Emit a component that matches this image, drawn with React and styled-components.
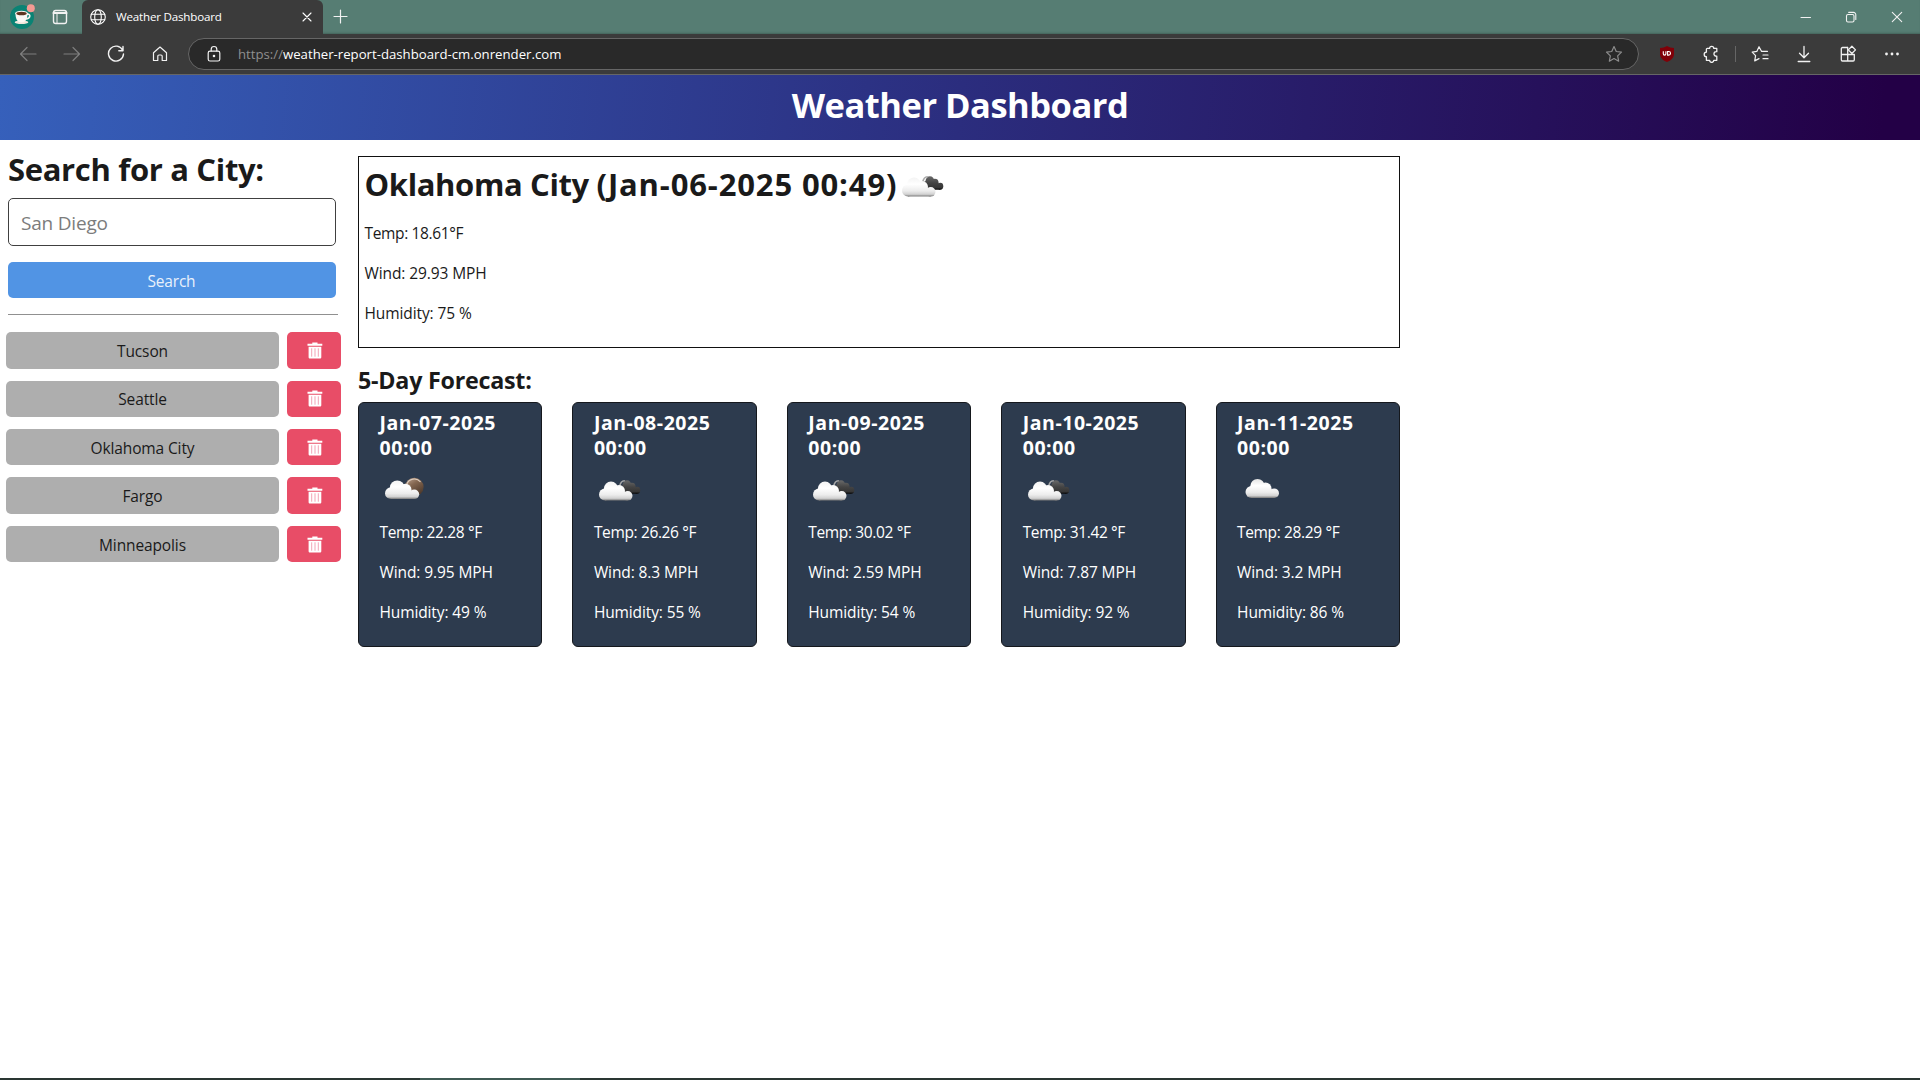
import React from "react";
import styled, { createGlobalStyle } from "styled-components";

const Global = createGlobalStyle`
  * { box-sizing: border-box; }
  html, body { margin: 0; padding: 0; background: #fff; overflow: hidden; }
  body { font-family: "Open Sans", "Noto Sans", sans-serif; color: #1a1a1a; }
  h1, h2, h3, h4, p { margin: 0; }
  svg { display: block; flex: none; }
`;

const Window = styled.div`
  width: 1920px;
  height: 1080px;
  display: flex;
  flex-direction: column;
  overflow: hidden;
`;

/* ---------- browser frame ---------- */
const TabBar = styled.div`
  height: 34px;
  flex: none;
  display: flex;
  background: #567d73;
  box-shadow: inset 0 -2px 2px -1px #44635b;
`;
const Slot = styled.div`
  width: ${(p) => p.$w || 44}px;
  height: ${(p) => p.$h || 32}px;
  flex: none;
  display: flex;
  align-items: center;
  justify-content: center;
  color: ${(p) => p.$color || "#f2f2f2"};
`;
const Tab = styled.div`
  width: 241px;
  height: 34px;
  margin-left: 6px;
  padding: 0 10px 0 8px;
  display: flex;
  align-items: center;
  background: #3b3b3b;
  color: #fff;
  border-radius: 6px 6px 0 0;
`;
const TabTitle = styled.span`
  flex: 1;
  margin-left: 10px;
  font-size: 11.6px;
  line-height: 16px;
  letter-spacing: -0.2px;
`;
const Caption = styled.div`
  margin-left: auto;
  display: flex;
`;
const Toolbar = styled.div`
  height: 40px;
  flex: none;
  display: flex;
  align-items: center;
  padding: 0 6px;
  background: #3b3b3b;
`;
const Address = styled.div`
  flex: 1;
  height: 32px;
  margin: 0 6px;
  display: flex;
  align-items: center;
  background: #292929;
  border: 1px solid #666;
  border-radius: 16px;
  color: #fff;
  font-size: 13.2px;
  line-height: 18px;
`;
const Scheme = styled.span`
  color: #8f8f8f;
`;
const Host = styled.span`
  flex: 1;
`;
const Divider = styled.div`
  width: 1px;
  height: 16px;
  margin: 0 2px;
  background: #666;
`;
const FrameEdge = styled.div`
  height: 1px;
  flex: none;
  background: #666;
`;

/* ---------- page ---------- */
const Banner = styled.header`
  height: 65px;
  flex: none;
  padding-top: 3px;
  background: linear-gradient(95deg, #3660bb 0%, #2b2d7e 50%, #230046 98%);
`;
const BannerTitle = styled.h1`
  font-size: 34.5px;
  line-height: 54px;
  letter-spacing: -0.5px;
  text-align: center;
  color: #fff;
`;
const Page = styled.main`
  flex: 1;
  display: flex;
`;
const Sidebar = styled.aside`
  width: 358px;
  padding: 10px 0 0 8px;
`;
const SearchTitle = styled.h2`
  font-size: 31px;
  line-height: 38px;
  letter-spacing: -0.33px;
  margin-bottom: 10px;
`;
const CityInput = styled.input`
  display: block;
  width: 328px;
  height: 48px;
  padding: 1px 12px 0;
  border: 1px solid #404040;
  border-radius: 5px;
  font: 400 19px "Open Sans", sans-serif;
  letter-spacing: -0.2px;
  outline: none;
  &::placeholder {
    color: #7c7c7c;
    opacity: 1;
  }
`;
const SearchButton = styled.button`
  display: block;
  width: 328px;
  height: 36px;
  margin-top: 16px;
  padding: 1px 1px 0 0;
  border: 0;
  border-radius: 5px;
  background: #5194e4;
  color: #e9f1fb;
  font: 15.5px "Open Sans", sans-serif;
  letter-spacing: -0.2px;
`;
const Rule = styled.div`
  width: 330px;
  height: 1px;
  margin-top: 16px;
  background: #909090;
`;
const History = styled.div`
  margin: 17.3px 0 0 -2px;
  display: flex;
  flex-direction: column;
  gap: 12px;
`;
const HistoryRow = styled.div`
  display: flex;
  gap: 8px;
  height: 36.4px;
`;
const CityButton = styled.button`
  width: 273px;
  padding: 1px 0 0;
  border: 0;
  border-radius: 5px;
  background: #aeaeae;
  color: #1a1a1a;
  font: 15.5px "Open Sans", sans-serif;
  letter-spacing: -0.12px;
`;
const DeleteButton = styled.button`
  width: 54px;
  padding: 0 0 0 1px;
  border: 0;
  border-radius: 5px;
  background: #e84d67;
  display: flex;
  align-items: center;
  justify-content: center;
`;
const Content = styled.section`
  width: 1042px;
  padding-top: 16px;
`;
const Current = styled.div`
  height: 192px;
  padding: 7px 5.5px 0;
  border: 1px solid #111;
`;
const CurrentTitle = styled.h2`
  height: 40px;
  margin-bottom: 17px;
  display: flex;
  align-items: center;
  font-size: 31px;
  line-height: 40px;
  white-space: pre;
`;
const CityName = styled.span`
  letter-spacing: -0.37px;
`;
const Stamp = styled.span`
  letter-spacing: 0.86px;
`;
const TitleIcon = styled.span`
  padding-top: 3px;
`;
const Metric = styled.p`
  font-size: 15.5px;
  line-height: 24px;
  letter-spacing: ${(p) => p.$track}px;
  & + & {
    margin-top: 16px;
  }
`;
const ForecastTitle = styled.h3`
  margin: 16px 0 6px;
  font-size: 23.3px;
  line-height: 32px;
  letter-spacing: -0.25px;
`;
const Forecast = styled.div`
  display: grid;
  grid-template-columns: repeat(5, 1fr);
  gap: 30px;
`;
const Card = styled.article`
  height: 245px;
  padding: 7px 20px 0 20.5px;
  border: 1px solid #15181d;
  border-radius: 6px;
  background: #2d3b4e;
  color: #fff;
`;
const CardDate = styled.h4`
  font-size: 19.5px;
  line-height: 25px;
  letter-spacing: 0.55px;
`;
const IconBox = styled.div`
  height: 50px;
  margin: 5px 0;
`;
const TaskbarEdge = styled.div`
  height: 2px;
  flex: none;
  padding-left: 420px;
  background: #2a3633;
`;
const TaskbarGlow = styled.div`
  width: 160px;
  height: 2px;
  background: #3f5a53;
`;

/* ---------- drawings ---------- */
const Line = ({ size = 18, w = 1.2, children }) => (
  <svg width={size} height={size} viewBox={`0 0 ${size} ${size}`} fill="none" stroke="currentColor" strokeWidth={w} strokeLinecap="round" strokeLinejoin="round">
    {children}
  </svg>
);

const Avatar = () => (
  <svg width="28" height="28" viewBox="0 0 28 28">
    <circle cx="14" cy="15" r="12" fill="#0a8374" />
    <ellipse cx="13.5" cy="20.3" rx="6.8" ry="1.8" fill="#efe6dc" />
    <path d="M19 12.200c4-.8 3.900 4.200-1.300 4.700" fill="none" stroke="#f7f3ee" strokeWidth="1.600" />
    <path d="M7.500 11.500c0 5 1.700 9 6 9s6-4 6-9z" fill="#fbf8f4" />
    <ellipse cx="13.500" cy="11.300" rx="6.300" ry="2.500" fill="#fbf8f4" />
    <ellipse cx="13.500" cy="11.500" rx="5.200" ry="1.800" fill="#5d3520" />
    <circle cx="22.800" cy="6.300" r="4" fill="#f59a93" />
  </svg>
);

const Trash = () => (
  <svg width="16" height="17" viewBox="0 0 16 17">
    <path fill="#fff" d="M5.3 0.6h5.2v1.2h4.8v1.9H.5V1.8h4.8zM1.6 4.8h12.7v10.4c0 .9-.6 1.4-1.4 1.4H3c-.8 0-1.4-.5-1.4-1.400z" />
    <path stroke="#f3a3b6" strokeWidth="1" d="M4.700 6.300v8.400M8 6.300v8.400M11.300 6.300v8.400" />
  </svg>
);

const Puffs = ({ fill }) => (
  <g fill={fill}>
    <circle cx="6" cy="13" r="6" />
    <circle cx="12" cy="7.2" r="7.2" />
    <circle cx="20" cy="9.5" r="6" />
    <circle cx="28.7" cy="14.2" r="4.8" />
    <path d="M6 10h18l4.7 0.8V19H6z" />
  </g>
);

const WeatherIcon = ({ kind, id }) => {
  const at = { moon: "translate(5 15.4) scale(1.02 .98)", broken: "translate(5 16.6)", cloud: "translate(8.5 14)" }[kind];
  return (
    <svg width="50" height="50" viewBox="0 0 50 50">
      <defs>
        <linearGradient id={`${id}w`} x1="0" y1="0" x2="0" y2="19" gradientUnits="userSpaceOnUse">
          <stop offset="0" stopColor={kind === "cloud" ? "#e4e4e4" : "#f4f4f4"} />
          <stop offset=".35" stopColor="#fff" />
          <stop offset=".7" stopColor="#ececec" />
          <stop offset=".88" stopColor="#d2d2d2" />
          <stop offset="1" stopColor="#777" />
        </linearGradient>
        <linearGradient id={`${id}d`} x1="0" y1="0" x2="0" y2="19" gradientUnits="userSpaceOnUse">
          <stop offset="0" stopColor="#6a6a6a" />
          <stop offset=".5" stopColor="#444" />
          <stop offset=".85" stopColor="#363636" />
          <stop offset="1" stopColor="#080808" />
        </linearGradient>
        <linearGradient id={`${id}m`} x1="0" y1="0" x2="0.6" y2="1">
          <stop offset="0" stopColor="#c4ab98" />
          <stop offset=".45" stopColor="#836650" />
          <stop offset="1" stopColor="#4e3a2c" />
        </linearGradient>
      </defs>
      {kind === "moon" && (
        <g>
          <circle cx="34.3" cy="22" r="9.3" fill={`url(#${id}m)`} />
          <path d="M26.5 20a8.2 8.2 0 0 1 14-3.2" fill="none" stroke="#e0d0c2" strokeWidth="1.1" />
        </g>
      )}
      {kind === "broken" && (
        <g>
          <g transform="translate(25.5 15.2) scale(.62 .71)">
            <Puffs fill={`url(#${id}d)`} />
          </g>
          <path d="M25.8 21.5c.2-3.4 2.2-5.9 5-5.7" fill="none" stroke="#a8a8a8" strokeWidth="1.5" />
        </g>
      )}
      <g transform={at}>
        <Puffs fill={`url(#${id}w)`} />
      </g>
    </svg>
  );
};

const CITIES = ["Tucson", "Seattle", "Oklahoma City", "Fargo", "Minneapolis"];
const DAYS = [
  { date: "Jan-07-2025 00:00", kind: "moon", temp: "22.28", wind: "9.95", hum: 49 },
  { date: "Jan-08-2025 00:00", kind: "broken", temp: "26.26", wind: "8.3", hum: 55 },
  { date: "Jan-09-2025 00:00", kind: "broken", temp: "30.02", wind: "2.59", hum: 54 },
  { date: "Jan-10-2025 00:00", kind: "broken", temp: "31.42", wind: "7.87", hum: 92 },
  { date: "Jan-11-2025 00:00", kind: "cloud", temp: "28.29", wind: "3.2", hum: 86 },
];

const STAR = "M9 1.6l2.25 4.9 5.25.65-3.85 3.7 1 5.35L9 13.6l-4.65 2.6 1-5.35L1.5 7.15l5.25-.65z";

export default function App() {
  return (
    <Window>
      <Global />
      <TabBar>
        <Slot $w={44}><Avatar /></Slot>
        <Slot $w={32} $h={34}>
          <Line size={16} w={1.4}>
            <rect x="1.5" y="1.5" width="13" height="13" rx="2.2" />
            <path d="M1.5 4h13" strokeWidth="2" />
            <path d="M5 4v10" strokeWidth="1" />
          </Line>
        </Slot>
        <Tab>
          <Line size={16} w={1.1}>
            <circle cx="8" cy="8" r="7.3" />
            <ellipse cx="8" cy="8" rx="3.3" ry="7.3" />
            <path d="M1.3 5.3h13.4M1.3 10.7h13.4" />
          </Line>
          <TabTitle>Weather Dashboard</TabTitle>
          <Line size={12} w={1.1}><path d="M2 2l8 8M10 2l-8 8" /></Line>
        </Tab>
        <Slot $w={35} $h={33}>
          <Line size={15}><path d="M7.5 1v13M1 7.5h13" /></Line>
        </Slot>
        <Caption>
          <Slot $w={46} $h={34}><Line size={11} w={1}><path d="M1 5.5h9.5" /></Line></Slot>
          <Slot $w={46} $h={34}>
            <Line size={12} w={1.1}>
              <rect x="1.5" y="3.5" width="7.5" height="7.5" rx="1.5" />
              <path d="M3.7 1.4h4.8a2.3 2.3 0 0 1 2.3 2.3v4.8" />
            </Line>
          </Slot>
          <Slot $w={46} $h={34}><Line size={12} w={1.1}><path d="M1.3 1.3l9.4 9.4M10.7 1.3l-9.4 9.4" /></Line></Slot>
        </Caption>
      </TabBar>
      <Toolbar>
        <Slot $color="#7e7e7e"><Line><path d="M17 9H1.5M8 2.5L1.5 9 8 15.5" /></Line></Slot>
        <Slot $color="#7e7e7e"><Line><path d="M1 9h15.5M10 2.5L16.5 9 10 15.5" /></Line></Slot>
        <Slot><Line w={1.4}><path d="M15.7 5.2A7.5 7.5 0 1 0 16.5 9M16 1.5v4.2h-4.2" /></Line></Slot>
        <Slot>
          <Line w={1.2}>
            <path d="M2.5 7.7L9 2l6.5 5.7v7.8h-4.300v-4.300a1.200 1.200 0 0 0-1.200-1.200H8a1.200 1.200 0 0 0-1.200 1.200v4.300H2.500z" />
          </Line>
        </Slot>
        <Address>
          <Slot $w={49} $h={30}>
            <Line w={1.2}>
              <rect x="3.2" y="6.2" width="11.6" height="9.8" rx="1.8" />
              <path d="M6.2 6V4.300a2.800 2.800 0 0 1 5.600 0V6" />
              <circle cx="9" cy="11" r=".7" fill="currentColor" />
            </Line>
          </Slot>
          <Scheme>https://</Scheme>
          <Host>weather-report-dashboard-cm.onrender.com</Host>
          <Slot $w={48} $h={30} $color="#8d8d8d"><Line><path d={STAR} /></Line></Slot>
        </Address>
        <Slot>
          <svg width="16" height="18" viewBox="0 0 16 18">
            <path d="M8 1c2 1.3 4.3 1.9 7 1.9v5.6c0 4-2.3 6.5-7 8.5-4.7-2-7-4.5-7-8.5V2.900C3.700 2.900 6 2.300 8 1z" fill="#800008" />
            <path d="M4.300 6.300v2.500a1.300 1.300 0 0 0 2.600 0V6.300M8.600 6.500v3.600h1.100a1.800 1.800 0 0 0 0-3.600z" fill="none" stroke="#fff" strokeWidth="1.1" />
          </svg>
        </Slot>
        <Slot>
          <Line w={1.3}>
            <path d="M5.2 3.4H7.6a2.1 2.1 0 0 1 4.2 0h3v3.3h-.6a2.25 2.25 0 0 0 0 4.5h.6v4.1h-3a2.1 2.1 0 0 1-4.2 0H4.400v-3.700a2.200 2.200 0 0 1 0-4.400V4.200a.8.8 0 0 1 .8-.8z" />
          </Line>
        </Slot>
        <Divider />
        <Slot>
          <Line w={1.2}>
            <path d="M10.5 6.300L8 1.700 5.800 6.400 1.200 7.100l3.400 3.500-.9 5.300 4.300-2.300M10.500 6.300h6M12 10h5M12 13.700h5" />
          </Line>
        </Slot>
        <Slot><Line w={1.3}><path d="M9 1.5v11M4.500 8.300L9 12.700l4.500-4.400M3.200 16.500h11.600" /></Line></Slot>
        <Slot>
          <Line w={1.3}>
            <path d="M8.500 2.500H3.500a1.200 1.200 0 0 0-1.200 1.200v11.100A1.200 1.200 0 0 0 3.500 16h10.600a1.200 1.200 0 0 0 1.200-1.200v-5.300H2.300M8.700 2.500V16" />
            <path d="M12.900 1.300l3.600 3.600-3.600 3.600-3.600-3.600z" />
          </Line>
        </Slot>
        <Slot>
          <svg width="16" height="4" viewBox="0 0 16 4" fill="#f2f2f2">
            <circle cx="2.5" cy="2" r="1.4" />
            <circle cx="8" cy="2" r="1.4" />
            <circle cx="13.5" cy="2" r="1.4" />
          </svg>
        </Slot>
      </Toolbar>
      <FrameEdge />

      <Banner><BannerTitle>Weather Dashboard</BannerTitle></Banner>
      <Page>
        <Sidebar>
          <SearchTitle>Search for a City:</SearchTitle>
          <CityInput placeholder="San Diego" />
          <SearchButton>Search</SearchButton>
          <Rule />
          <History>
            {CITIES.map((city) => (
              <HistoryRow key={city}>
                <CityButton>{city}</CityButton>
                <DeleteButton aria-label="Delete"><Trash /></DeleteButton>
              </HistoryRow>
            ))}
          </History>
        </Sidebar>
        <Content>
          <Current>
            <CurrentTitle>
              <CityName>Oklahoma City </CityName>
              <Stamp>(Jan-06-2025 00:49)</Stamp>
              <TitleIcon><WeatherIcon kind="broken" id="now" /></TitleIcon>
            </CurrentTitle>
            <Metric $track={-0.36}>Temp: 18.61°F</Metric>
            <Metric $track={-0.1}>Wind: 29.93 MPH</Metric>
            <Metric $track={-0.1}>Humidity: 75 %</Metric>
          </Current>
          <ForecastTitle>5-Day Forecast:</ForecastTitle>
          <Forecast>
            {DAYS.map((d, i) => (
              <Card key={d.date}>
                <CardDate>{d.date}</CardDate>
                <IconBox><WeatherIcon kind={d.kind} id={`day${i}`} /></IconBox>
                <Metric $track={-0.36}>{`Temp: ${d.temp} °F`}</Metric>
                <Metric $track={-0.1}>{`Wind: ${d.wind} MPH`}</Metric>
                <Metric $track={-0.12}>{`Humidity: ${d.hum} %`}</Metric>
              </Card>
            ))}
          </Forecast>
        </Content>
      </Page>
      <TaskbarEdge><TaskbarGlow /></TaskbarEdge>
    </Window>
  );
}
